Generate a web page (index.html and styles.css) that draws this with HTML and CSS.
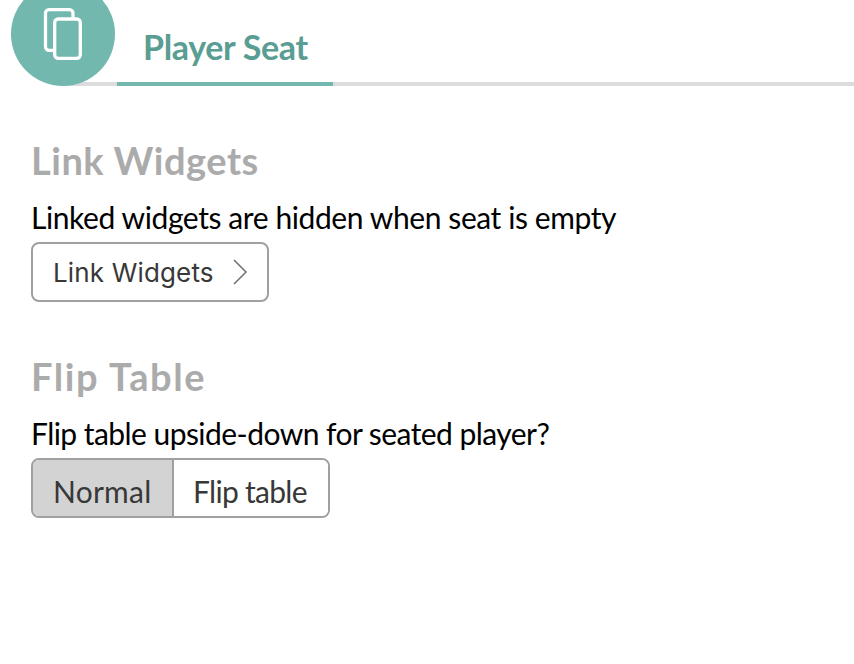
FILE: index.html
```html
<!DOCTYPE html>
<html lang="en">
<head>
<meta charset="utf-8">
<title>Player Seat</title>
<link rel="stylesheet" href="styles.css">
</head>
<body>
<header class="header">
  <div class="badge">
    <svg class="cards" viewBox="0 0 40 54" fill="none" stroke="#fff" stroke-width="3.3">
      <path d="M11.500 44.300H7a3.500 3.500 0 0 1-3.500-3.500V7.200a3.500 3.500 0 0 1 3.500-3.500h20.500a3.500 3.500 0 0 1 3.500 3.500V12"/>
      <rect x="12.700" y="13" width="25.600" height="39.300" rx="3.500"/>
    </svg>
  </div>
  <div class="tab"><span class="tab-label">Player Seat</span></div>
</header>
<main class="content">
  <section class="section">
    <h2 class="heading heading-link">Link Widgets</h2>
    <p class="text text-link">Linked widgets are hidden when seat is empty</p>
    <button class="link-button"><span>Link Widgets</span>
      <svg class="chevron" viewBox="0 0 15 26" fill="none" stroke="#707070" stroke-width="1.500"><path d="M1 1l12 12L1 25"/></svg>
    </button>
  </section>
  <section class="section">
    <h2 class="heading heading-flip">Flip Table</h2>
    <p class="text text-flip">Flip table upside-down for seated player?</p>
    <div class="segments">
      <button class="segment segment-normal selected">Normal</button>
      <button class="segment segment-flip">Flip table</button>
    </div>
  </section>
</main>
</body>
</html>
```
FILE: styles.css
```css
* { box-sizing: border-box; }
body { margin: 0; height: 664px; overflow: hidden; background: #fff; color: #000; font-family: Lato, sans-serif; }
.header { display: flex; height: 86px; padding-left: 11px; background: linear-gradient(#dcdcdc, #dcdcdc) 64px 82px / 790px 4px no-repeat; }
.badge { width: 104px; height: 104px; margin-top: -18px; border-radius: 50%; background: #72b8ae; padding: 24px 0 0 31px; flex: none; }
.cards { display: block; width: 40px; height: 54px; }
.tab { width: 216px; height: 86px; margin-left: 2px; padding: 25px 0 0 26px; border-bottom: 4px solid #72b8ae; color: #5a9d93; font-size: 34px; line-height: 44px; font-weight: 700; white-space: nowrap; }
.tab-label { letter-spacing: -0.33px; }
.content { padding: 50px 31px 0; }
.section { height: 216px; }
.heading { margin: 0; height: 48px; line-height: 48px; font-size: 38px; font-weight: 700; color: #ababab; white-space: nowrap; }
.heading-link { letter-spacing: 0.5px; }
.heading-flip { letter-spacing: 1.6px; }
.text { margin: 0; padding-top: 15px; height: 58px; line-height: 36px; font-size: 30px; white-space: nowrap; }
.text-link { letter-spacing: -0.41px; }
.text-flip { letter-spacing: -0.55px; }
button { margin: 0; font-family: inherit; color: #383838; background: #fff; white-space: nowrap; }
.link-button { display: flex; align-items: center; width: 238px; height: 60px; padding: 0 19px 0 20px; border: 2px solid #a0a0a0; border-radius: 8px; font-family: Inter, sans-serif; font-size: 26px; letter-spacing: 0.15px; }
.chevron { width: 15px; height: 26px; margin-left: auto; }
.segments { display: flex; width: 299px; height: 60px; border: 2px solid #a0a0a0; border-radius: 8px; overflow: hidden; }
.segment { border: 0; padding: 5px 0 0 20px; font-size: 30px; text-align: left; }
.segment-normal { width: 141px; border-right: 2px solid #a0a0a0; letter-spacing: 0.25px; }
.segment-flip { width: 154px; padding-left: 19px; letter-spacing: -0.7px; }
.selected { background: #d3d3d3; }
```
